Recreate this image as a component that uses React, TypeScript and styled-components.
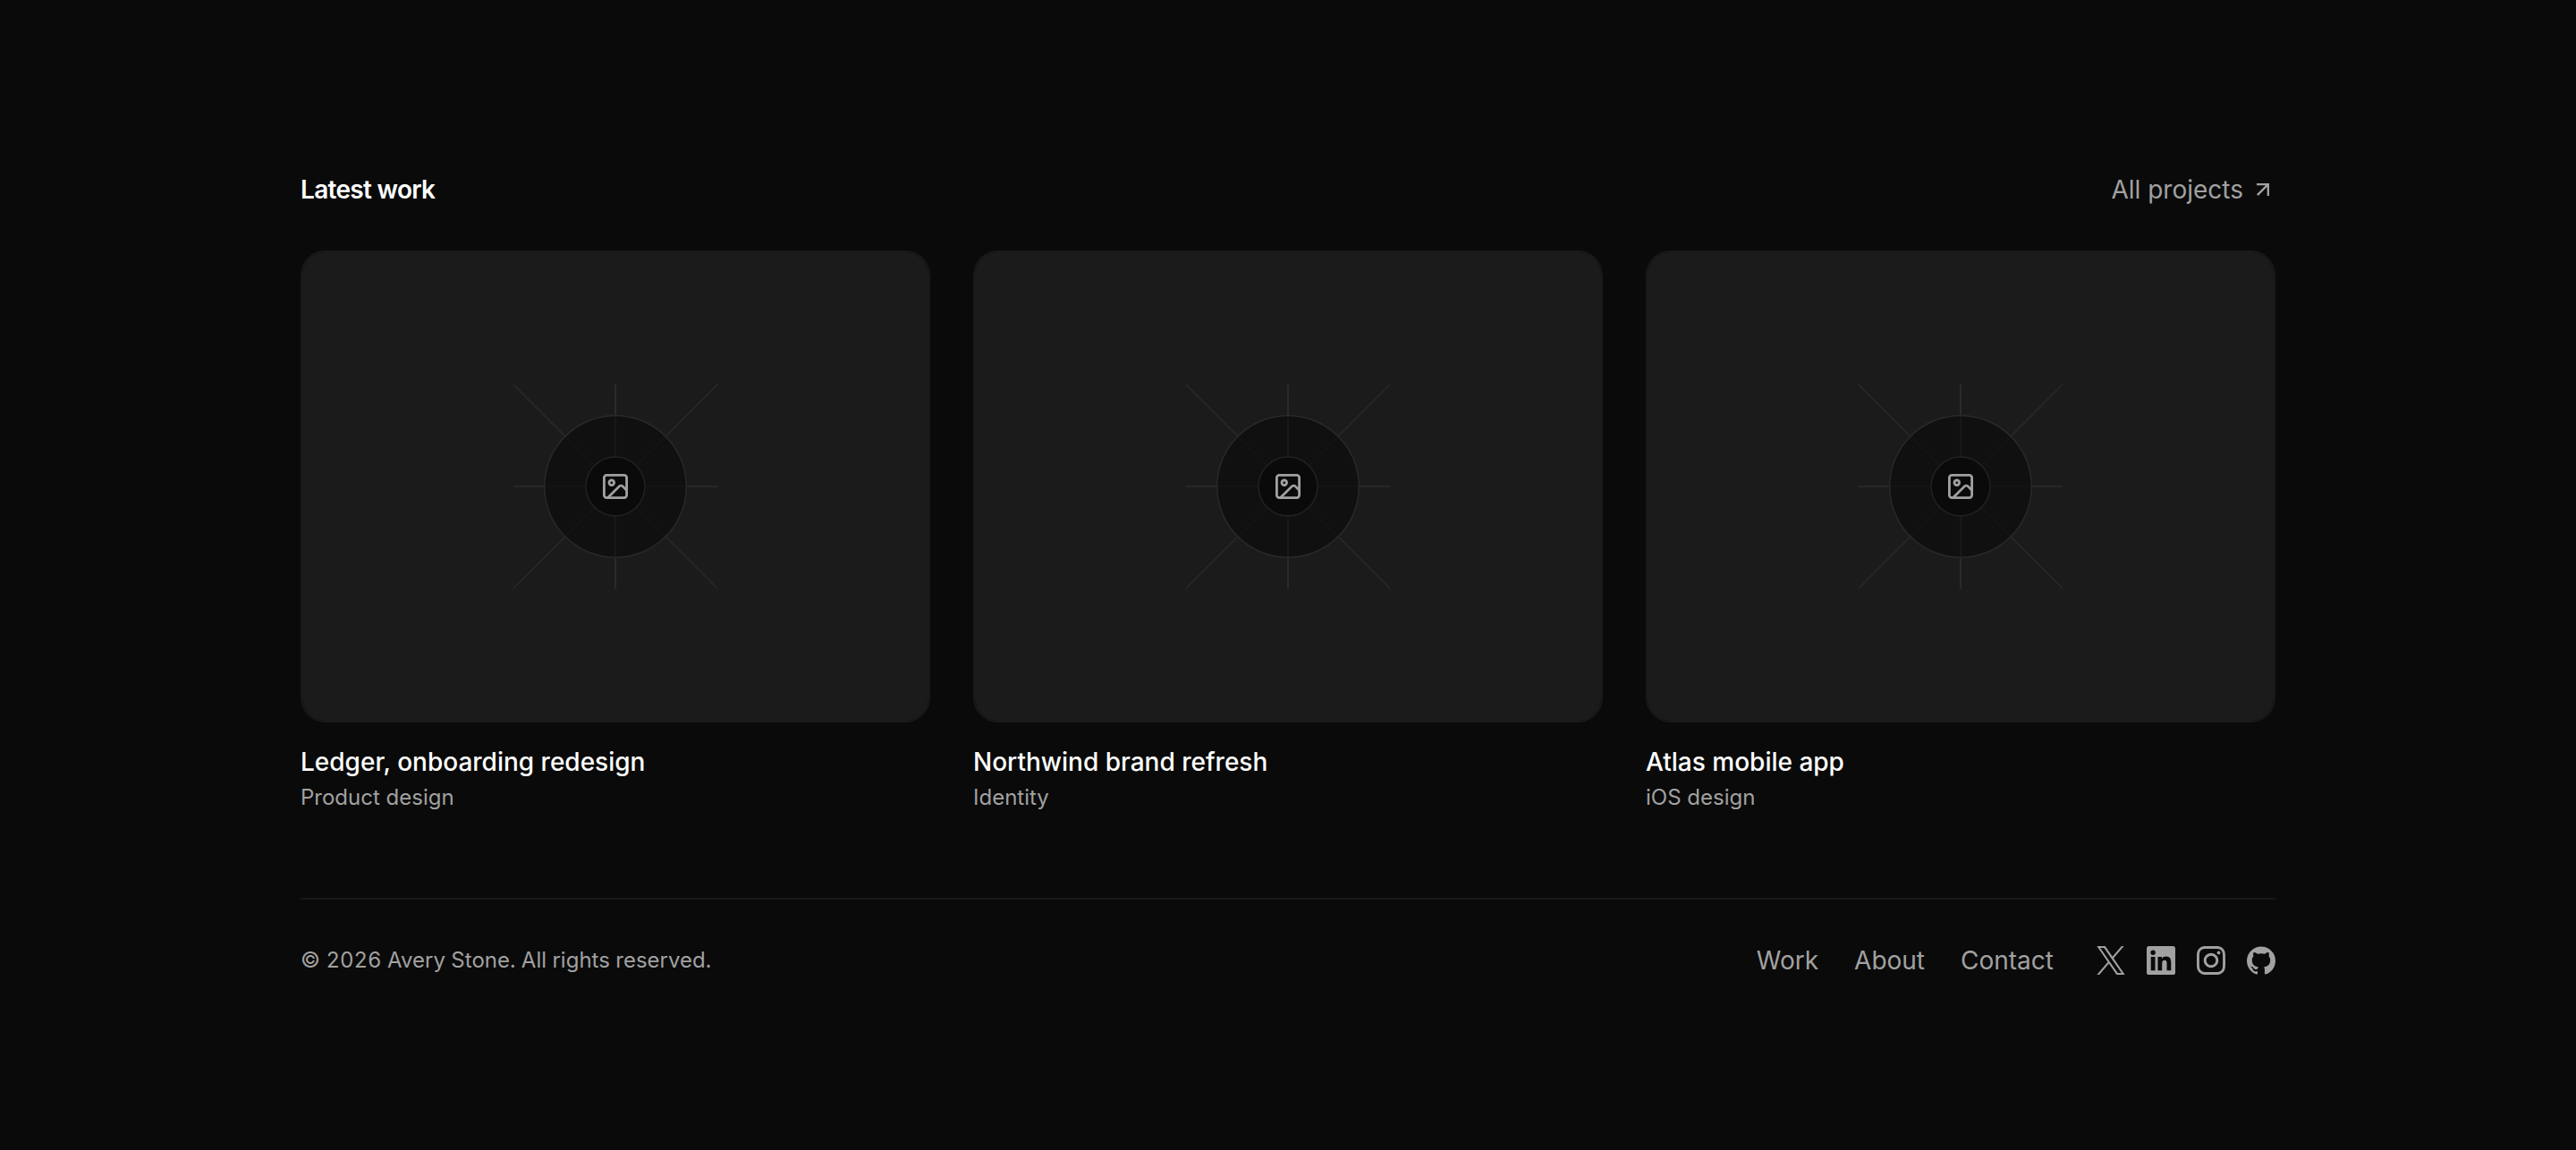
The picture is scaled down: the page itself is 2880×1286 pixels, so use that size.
import React from "react";
import styled, { createGlobalStyle } from "styled-components";
import { SiInstagram, SiGithub } from "react-icons/si";

const GlobalStyle = createGlobalStyle`
  *, *::before, *::after { box-sizing: border-box; }
  body {
    margin: 0;
    background: #0a0a0a;
    color: #ffffff;
    font-family: Inter, "Liberation Sans", sans-serif;
  }
`;

const Page = styled.div`
  min-height: 1286px;
  padding: 192px 336px;
  background: #0a0a0a;
`;

const SectionHeader = styled.header`
  display: flex;
  align-items: center;
  justify-content: space-between;
  margin-bottom: 48px;
`;

const Heading = styled.h2`
  margin: 0;
  font-size: 28px;
  line-height: 40px;
  font-weight: 600;
  letter-spacing: -0.7px;
`;

const TextLink = styled.a`
  display: inline-flex;
  align-items: center;
  gap: 8px;
  font-size: 28px;
  line-height: 40px;
  color: #a1a1a1;
  text-decoration: none;
`;

const Grid = styled.div`
  display: grid;
  grid-template-columns: repeat(3, 1fr);
  gap: 48px;
`;

const Card = styled.article`
  display: flex;
  flex-direction: column;
`;

const Thumb = styled.div`
  display: flex;
  height: 528px;
  margin-bottom: 24px;
  overflow: hidden;
  border: 2px solid #191919;
  border-radius: 28px;
`;

const ThumbFill = styled.div`
  display: grid;
  flex: 1;
  place-items: center;
  background: #1b1b1b;
`;

const CardTitle = styled.h3`
  margin: 0 0 4px;
  font-size: 28px;
  line-height: 40px;
  font-weight: 500;
`;

const CardMeta = styled.p`
  margin: 0;
  font-size: 24px;
  line-height: 32px;
  color: #a1a1a1;
`;

const Footer = styled.footer`
  display: flex;
  align-items: center;
  justify-content: space-between;
  margin-top: 96px;
  padding-top: 48px;
  border-top: 2px solid #191919;
`;

const Copyright = styled.p`
  margin: 0;
  font-size: 24px;
  line-height: 32px;
  font-variant-numeric: tabular-nums;
  color: #a1a1a1;
`;

const FooterSide = styled.div`
  display: flex;
  align-items: center;
  gap: 48px;
`;

const Row = styled.nav<{ $gap: number }>`
  display: flex;
  align-items: center;
  gap: ${(p) => p.$gap}px;
`;

const SocialLink = styled.a`
  display: flex;
  color: #a1a1a1;
`;

const ArrowIcon = () => (
  <svg width="28" height="28" viewBox="0 0 24 24" fill="none" stroke="currentColor" strokeWidth="2">
    <path d="M6 7h11v11M17 7 6.7 17.3" />
  </svg>
);

const XIcon = () => (
  <svg width="32" height="32" viewBox="0 0 24 24" fill="currentColor">
    <path d="M14.234 10.162 22.977 0h-2.072l-7.591 8.824L7.251 0H.258l9.168 13.343L.258 24H2.33l8.016-9.318L16.749 24h6.993zm-2.837 3.299-.929-1.329L3.076 1.56h3.182l5.965 8.532.929 1.329 7.754 11.09h-3.182z" />
  </svg>
);

const LinkedInIcon = () => (
  <svg width="32" height="32" viewBox="0 0 24 24" fill="currentColor">
    <path d="M20.447 20.452h-3.554v-5.569c0-1.328-.027-3.037-1.852-3.037-1.853 0-2.136 1.445-2.136 2.939v5.667H9.351V9h3.414v1.561h.046c.477-.9 1.637-1.85 3.37-1.85 3.601 0 4.267 2.37 4.267 5.455v6.286zM5.337 7.433a2.062 2.062 0 0 1-2.063-2.065 2.064 2.064 0 1 1 2.063 2.065zm1.782 13.019H3.555V9h3.564v11.452zM22.225 0H1.771C.792 0 0 .774 0 1.729v20.542C0 23.227.792 24 1.771 24h20.451C23.2 24 24 23.227 24 22.271V1.729C24 .774 23.2 0 22.222 0h.003z" />
  </svg>
);

const Placeholder = () => (
  <svg width="230" height="230" viewBox="-115 -115 230 230" fill="none">
    <path stroke="#2a2a2a" strokeWidth="2" d="M0-114.4V114.4" />
    <path stroke="#272727" strokeWidth="2" d="M-114.4 0H114.4" />
    <path stroke="#2e2e2e" strokeWidth="1.1" d="M-114.4-114.4 114.4 114.4M114.4-114.4-114.4 114.4" />
    <circle r="79.3" fill="#0a0a0a" fillOpacity="0.63" stroke="#2a2a2a" strokeWidth="1.4" />
    <path stroke="#181818" strokeWidth="2" d="M0-78.6V78.6" />
    <circle r="33" fill="#0a0a0a" stroke="#232323" strokeWidth="1.4" />
    <g transform="translate(-16.8 -16.8) scale(1.4)" stroke="#a1a1a1" strokeWidth="2" strokeLinecap="round" strokeLinejoin="round">
      <rect width="18" height="18" x="3" y="3" rx="2" />
      <circle cx="9" cy="9" r="2" />
      <path d="m21 15-3.086-3.086a2 2 0 0 0-2.828 0L6 21" />
    </g>
  </svg>
);

const projects = [
  { title: "Ledger, onboarding redesign", meta: "Product design" },
  { title: "Northwind brand refresh", meta: "Identity" },
  { title: "Atlas mobile app", meta: "iOS design" },
];

export default function App() {
  return (
    <Page>
      <GlobalStyle />
      <SectionHeader>
        <Heading>Latest work</Heading>
        <TextLink>
          All projects
          <ArrowIcon />
        </TextLink>
      </SectionHeader>
      <Grid>
        {projects.map((p) => (
          <Card key={p.title}>
            <Thumb>
              <ThumbFill>
                <Placeholder />
              </ThumbFill>
            </Thumb>
            <CardTitle>{p.title}</CardTitle>
            <CardMeta>{p.meta}</CardMeta>
          </Card>
        ))}
      </Grid>
      <Footer>
        <Copyright>© 2026 Avery Stone. All rights reserved.</Copyright>
        <FooterSide>
          <Row $gap={40}>
            <TextLink>Work</TextLink>
            <TextLink>About</TextLink>
            <TextLink>Contact</TextLink>
          </Row>
          <Row $gap={24}>
            <SocialLink><XIcon /></SocialLink>
            <SocialLink><LinkedInIcon /></SocialLink>
            <SocialLink><SiInstagram size={32} /></SocialLink>
            <SocialLink><SiGithub size={32} /></SocialLink>
          </Row>
        </FooterSide>
      </Footer>
    </Page>
  );
}
